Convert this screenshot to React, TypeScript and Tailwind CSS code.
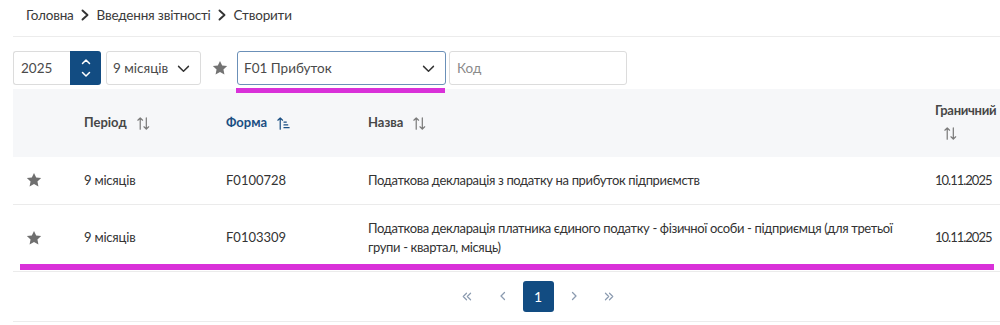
import { FC } from "react";

const Star: FC<{ className?: string }> = ({ className }) => (
  <svg viewBox="0 0 24 24" className={className} fill="currentColor">
    <path d="M12 2.5l2.9 6.1 6.6.8-4.9 4.6 1.3 6.6L12 17.3l-5.9 3.3 1.3-6.6-4.9-4.6 6.6-.8z" />
  </svg>
);

const Chevron: FC<{ className?: string; dir?: "down" | "up" | "right" | "left"; w?: number }> = ({
  className,
  dir = "down",
  w = 2.6
}) => {
  const d =
    dir === "down"
      ? "M5 9l7 7 7-7"
      : dir === "up"
      ? "M5 15l7-7 7 7"
      : dir === "right"
      ? "M9 5l7 7-7 7"
      : "M15 5l-7 7 7 7";
  return (
    <svg viewBox="0 0 24 24" className={className} fill="none" stroke="currentColor" strokeWidth={w} strokeLinecap="round" strokeLinejoin="round">
      <path d={d} />
    </svg>
  );
};

const Crumb: FC = () => (
  <span className="flex w-[23px] shrink-0 justify-center">
    <svg viewBox="0 0 8 12" className="h-[12px] w-[8px] text-[#333]" fill="none" stroke="currentColor" strokeWidth={1.9} strokeLinecap="round" strokeLinejoin="round">
      <path d="M1.5 1.5L6.5 6l-5 4.5" />
    </svg>
  </span>
);

const SortIcon: FC = () => (
  <svg viewBox="0 0 16 16" className="h-[15px] w-[15px] text-[#7a7a7a]" fill="none" stroke="currentColor" strokeWidth={1.3} strokeLinecap="round" strokeLinejoin="round">
    <path d="M4.5 14V2M2 4.5l2.5-2.5 2.5 2.5" />
    <path d="M11 2v12M8.5 11.5l2.5 2.5 2.5-2.5" />
  </svg>
);

const SortAscIcon: FC = () => (
  <svg viewBox="0 0 16 16" className="h-[15px] w-[15px] text-[#1b4f83]" fill="none" stroke="currentColor" strokeWidth={1.3} strokeLinecap="round" strokeLinejoin="round">
    <path d="M4.5 14V2M2 4.5l2.5-2.5 2.5 2.5" />
    <path d="M8.5 6.5h2.5M8.5 9.5h4M8.5 12.5h5.5" />
  </svg>
);

const rows = [
  {
    period: "9 місяців",
    form: "F0100728",
    name: "Податкова декларація з податку на прибуток підприємств",
    date: "10.11.2025",
    h: "h-[47px]"
  },
  {
    period: "9 місяців",
    form: "F0103309",
    name: "Податкова декларація платника єдиного податку - фізичної особи - підприємця (для третьої групи - квартал, місяць)",
    date: "10.11.2025",
    h: "h-[67px]"
  }
];

const App: FC = () => {
  return (
    <div className="relative h-[325px] w-[1000px] overflow-hidden bg-white pl-[13px] font-['Lato','Noto_Sans',sans-serif] text-[13px] text-[#333]">
      {/* breadcrumb */}
      <div className="flex h-[29px] items-center whitespace-nowrap pl-[13px] pt-[1px] text-[13.5px] tracking-[-0.2px] text-[#3a3a3a]">
        <span className="shrink-0">Головна</span>
        <Crumb />
        <span className="shrink-0">Введення звітності</span>
        <Crumb />
        <span className="shrink-0">Створити</span>
      </div>
      <div className="mt-[7px] h-px bg-[#ececec]" />

      {/* filters */}
      <div className="mt-[14px] flex h-[34px] items-center text-[13.5px] text-[#4a4a4a]">
        <div className="flex h-full">
          <div className="flex w-[57px] items-center rounded-l-[3px] border border-r-0 border-[#dcdcdc] pl-[7px]">
            2025
          </div>
          <div className="flex w-[31px] flex-col items-center justify-center rounded-r-[3px] bg-[#124c82] text-white">
            <Chevron dir="up" className="h-[12px] w-[12px]" w={3} />
            <Chevron dir="down" className="h-[12px] w-[12px]" w={3} />
          </div>
        </div>
        <div className="ml-[5px] flex h-full w-[95px] items-center justify-between rounded-[3px] border border-[#dcdcdc] pl-[6px] pr-[8px]">
          <span>9 місяців</span>
          <Chevron className="h-[17px] w-[17px] text-[#333]" w={2} />
        </div>
        <Star className="ml-[10px] h-[18px] w-[18px] text-[#737373]" />
        <div className="ml-[8px] flex h-full w-[209px] items-center justify-between rounded-[3px] border border-[#6b90b8] pl-[6px] pr-[8px]">
          <span>F01 Прибуток</span>
          <Chevron className="h-[17px] w-[17px] text-[#333]" w={2} />
        </div>
        <div className="ml-[3px] flex h-full w-[178px] items-center rounded-[3px] border border-[#dcdcdc] pl-[7px] text-[#8a8a8a]">
          Код
        </div>
      </div>

      {/* table */}
      <table className="mt-[4px] w-[1100px] table-fixed border-collapse">
        <colgroup>
          <col className="w-[57px]" />
          <col className="w-[142px]" />
          <col className="w-[142px]" />
          <col className="w-[567px]" />
          <col className="w-[192px]" />
        </colgroup>
        <thead>
          <tr className="h-[68px] bg-[#f6f7f9] text-left font-bold text-[#474747]">
            <th />
            <th className="px-[14px]">
              <span className="inline-flex items-center gap-[9px]">
                Період <SortIcon />
              </span>
            </th>
            <th className="px-[14px] text-[#1b4f83]">
              <span className="inline-flex items-center gap-[9px]">
                Форма <SortAscIcon />
              </span>
            </th>
            <th className="px-[14px]">
              <span className="inline-flex items-center gap-[9px]">
                Назва <SortIcon />
              </span>
            </th>
            <th className="px-[14px] pb-[4px] tracking-[-0.3px]">
              <div>Граничний</div>
              <div className="mt-[5px] pl-[8px]">
                <SortIcon />
              </div>
            </th>
          </tr>
        </thead>
        <tbody>
          {rows.map((r) => (
            <tr key={r.form} className={`${r.h} border-b border-[#ebebeb]`}>
              <td className="pl-[12px]">
                <Star className="h-[18px] w-[18px] text-[#6f6f6f]" />
              </td>
              <td className="px-[14px] tracking-[-0.2px]">{r.period}</td>
              <td className="px-[14px]">{r.form}</td>
              <td className="px-[14px] leading-[19px] tracking-[-0.36px]">{r.name}</td>
              <td className="px-[14px] tracking-[-1px]">{r.date}</td>
            </tr>
          ))}
        </tbody>
      </table>

      {/* pagination */}
      <div className="flex h-[49px] w-[1050px] items-center justify-center">
        <div className="flex items-center text-[#8b9bb0]">
          <span className="flex w-[36px] justify-center">
            <svg viewBox="0 0 16 16" className="h-[13px] w-[13px]" fill="none" stroke="currentColor" strokeWidth={1.5} strokeLinecap="round" strokeLinejoin="round">
              <path d="M8 4L4 8l4 4M13 4L9 8l4 4" />
            </svg>
          </span>
          <span className="flex w-[36px] justify-center">
            <Chevron dir="left" className="h-[12px] w-[12px]" />
          </span>
          <span className="mx-[2px] flex h-[31px] w-[31px] items-center justify-center rounded-[3px] bg-[#124c82] text-[14px] text-white">
            1
          </span>
          <span className="flex w-[36px] justify-center">
            <Chevron dir="right" className="h-[12px] w-[12px]" />
          </span>
          <span className="flex w-[36px] justify-center">
            <svg viewBox="0 0 16 16" className="h-[13px] w-[13px]" fill="none" stroke="currentColor" strokeWidth={1.5} strokeLinecap="round" strokeLinejoin="round">
              <path d="M3 4l4 4-4 4M8 4l4 4-4 4" />
            </svg>
          </span>
        </div>
      </div>
      <div className="h-px bg-[#ececec]" />

      {/* highlight marks */}
      <div className="absolute left-[236px] top-[88px] h-[5px] w-[209px] bg-[#d931d9]" />
      <div className="absolute left-[20px] top-[264px] h-[6px] w-[974px] bg-[#d931d9]" />
    </div>
  );
};

export default App;
